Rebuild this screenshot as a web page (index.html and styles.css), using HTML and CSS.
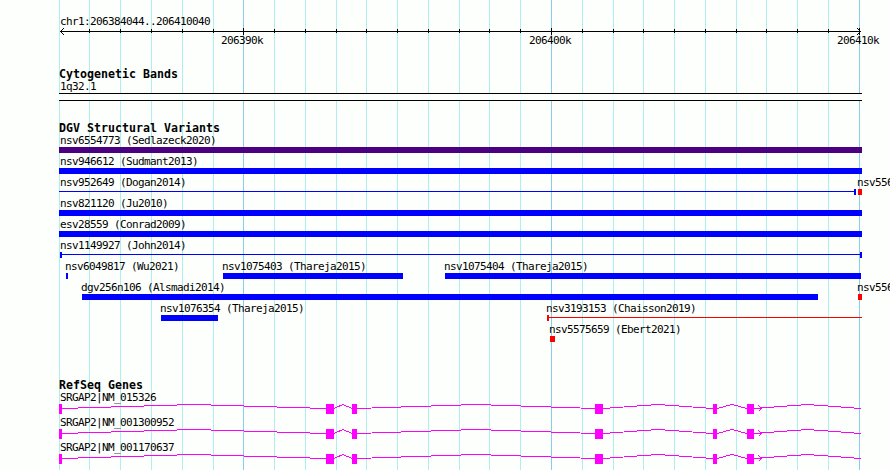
FILE: index.html
```html
<!DOCTYPE html>
<html lang="en">
<head>
<meta charset="utf-8">
<title>chr1:206384044..206410040</title>
<link rel="stylesheet" href="styles.css">
</head>
<body>
<main class="browser">
  <svg class="gridlines" width="890" height="470" aria-hidden="true">
    <path class="minor" d="M59.5 0V470M89.5 0V470M120.5 0V470M151.5 0V470M182.5 0V470M213.5 0V470M274.5 0V470M305.5 0V470M336.5 0V470M366.5 0V470M397.5 0V470M428.5 0V470M459.5 0V470M489.5 0V470M520.5 0V470M582.5 0V470M613.5 0V470M643.5 0V470M674.5 0V470M705.5 0V470M736.5 0V470M766.5 0V470M797.5 0V470M828.5 0V470"/>
    <path class="major" d="M243.5 0V470M551.5 0V470M859.5 0V470"/>
  </svg>

  <header class="ruler">
    <svg width="890" height="60">
      <text x="60" y="25">chr1:206384044..206410040</text>
      <path class="axis" d="M60 31.5H861M64 28L60.5 31.5L64 35M857 28L860.5 31.5L857 35"/>
      <path class="axis" d="M89.5 29V33M120.5 29V33M151.5 29V33M182.5 29V33M213.5 29V33M243.5 28V35M274.5 29V33M305.5 29V33M336.5 29V33M366.5 29V33M397.5 29V33M428.5 29V33M459.5 29V33M489.5 29V33M520.5 29V33M551.5 28V35M582.5 29V33M613.5 29V33M643.5 29V33M674.5 29V33M705.5 29V33M736.5 29V33M766.5 29V33M797.5 29V33M828.5 29V33M859.5 28V35"/>
      <text x="221" y="44">206390k</text>
      <text x="529" y="44">206400k</text>
      <text x="837" y="44">206410k</text>
    </svg>
  </header>

  <section class="track cytobands">
    <h2>Cytogenetic Bands</h2>
    <svg class="row" width="890" height="21">
      <text x="60" y="10">1q32.1</text>
      <rect class="band" x="59" y="13" width="803" height="8"/>
      <path class="axis" d="M59 13.5H862M59 20.5H862"/>
    </svg>
  </section>

  <section class="track variants">
    <h2>DGV Structural Variants</h2>
    <svg class="row" width="890" height="21">
      <text x="60" y="10">nsv6554773 (Sedlazeck2020)</text>
      <rect class="complex" x="59" y="13" width="803" height="6"/>
    </svg>
    <svg class="row" width="890" height="21">
      <text x="60" y="10">nsv946612 (Sudmant2013)</text>
      <rect class="gain" x="59" y="13" width="803" height="6"/>
    </svg>
    <svg class="row" width="890" height="21">
      <text x="60" y="10">nsv952649 (Dogan2014)</text>
      <rect class="gain" x="59" y="15" width="796" height="1"/>
      <rect class="gain" x="854" y="13" width="2" height="6"/>
      <text x="857" y="10">nsv556</text>
      <rect class="loss" x="858" y="13" width="4" height="6"/>
    </svg>
    <svg class="row" width="890" height="21">
      <text x="60" y="10">nsv821120 (Ju2010)</text>
      <rect class="gain" x="59" y="13" width="803" height="6"/>
    </svg>
    <svg class="row" width="890" height="21">
      <text x="60" y="10">esv28559 (Conrad2009)</text>
      <rect class="gain" x="59" y="13" width="803" height="6"/>
    </svg>
    <svg class="row" width="890" height="21">
      <text x="60" y="10">nsv1149927 (John2014)</text>
      <rect class="gain" x="60" y="13" width="2" height="6"/>
      <rect class="gain" x="62" y="15" width="798" height="1"/>
      <rect class="gain" x="860" y="13" width="2" height="6"/>
    </svg>
    <svg class="row" width="890" height="21">
      <text x="65" y="10">nsv6049817 (Wu2021)</text>
      <rect class="gain" x="66" y="13" width="2" height="6"/>
      <text x="222" y="10">nsv1075403 (Thareja2015)</text>
      <rect class="gain" x="223" y="13" width="180" height="6"/>
      <text x="444" y="10">nsv1075404 (Thareja2015)</text>
      <rect class="gain" x="445" y="13" width="416" height="6"/>
    </svg>
    <svg class="row" width="890" height="21">
      <text x="81" y="10">dgv256n106 (Alsmadi2014)</text>
      <rect class="gain" x="82" y="13" width="736" height="6"/>
      <text x="857" y="10">nsv556</text>
      <rect class="loss" x="858" y="13" width="4" height="6"/>
    </svg>
    <svg class="row" width="890" height="21">
      <text x="160" y="10">nsv1076354 (Thareja2015)</text>
      <rect class="gain" x="161" y="13" width="57" height="6"/>
      <text x="546" y="10">nsv3193153 (Chaisson2019)</text>
      <rect class="loss" x="547" y="13" width="2" height="6"/>
      <rect class="loss" x="549" y="15" width="313" height="1"/>
    </svg>
    <svg class="row" width="890" height="21">
      <text x="549" y="10">nsv5575659 (Ebert2021)</text>
      <rect class="loss" x="550" y="13" width="5" height="6"/>
    </svg>
  </section>

  <section class="track genes">
    <h2>RefSeq Genes</h2>
    <svg class="row" width="890" height="25">
      <text x="60" y="10">SRGAP2|NM_015326</text>
      <g id="transcript">
        <path class="intron" d="M62 17.5L194 13.5L326 17.5M334 17.5L343 13.5L352 17.5M357 17.5L476 13.5L595 17.5M603 17.5L658 13.5L713 17.5M717 17.5L732 13.5L747 17.5M754 17.5L807.5 13.5L861 17.5M754 17.5H762M758.5 14.5L761.5 17.5L758.5 20.5"/>
        <path class="exon" d="M59 13h3v10h-3zM326 13h8v10h-8zM352 13h5v10h-5zM595 13h8v10h-8zM713 13h4v10h-4zM747 13h7v10h-7z"/>
      </g>
    </svg>
    <svg class="row" width="890" height="25">
      <text x="60" y="10">SRGAP2|NM_001300952</text>
      <use href="#transcript"/>
    </svg>
    <svg class="row" width="890" height="25">
      <text x="60" y="10">SRGAP2|NM_001170637</text>
      <use href="#transcript"/>
    </svg>
  </section>
</main>
</body>
</html>
```

FILE: styles.css
```css
body {
  margin: 0;
  background: #fdfffc;
}

.browser {
  position: relative;
  width: 890px;
  height: 470px;
  overflow: hidden;
  color: #000;
  font-family: "DejaVu Sans Mono", "Liberation Mono", monospace;
}

.gridlines {
  position: absolute;
  inset: 0;
  z-index: -1;
}

svg {
  display: block;
  shape-rendering: crispEdges;
}

text {
  font-size: 11px;
  letter-spacing: -0.622px;
  white-space: pre;
}

h2 {
  height: 13px;
  margin: 0 0 0 59px;
  font-size: 11.6px;
  font-weight: bold;
  line-height: 15px;
  letter-spacing: 0.017px;
}

.ruler { height: 67px; }
.cytobands { height: 54px; }
.variants { height: 257px; }

.minor, .major, .axis, .intron {
  fill: none;
  stroke-width: 1px;
}

.minor { stroke: #afeeee; }
.major { stroke: #87ceeb; }
.axis { stroke: #000; }
.band { fill: #fdfffc; }
.complex { fill: #4b0082; }
.gain { fill: #00f; }
.loss { fill: #f00; }
.intron { stroke: #f0f; }
.exon { fill: #f0f; }
```
